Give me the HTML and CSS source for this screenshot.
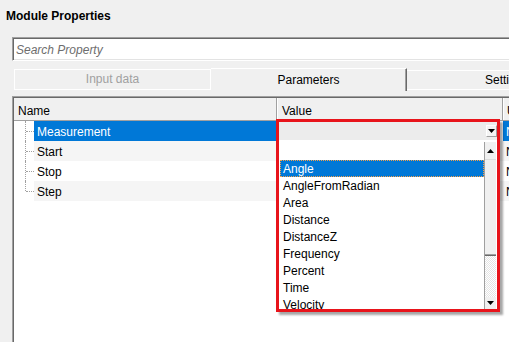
FILE: index.html
```html
<!DOCTYPE html>
<html>
<head>
<meta charset="utf-8">
<link rel="stylesheet" href="styles.css">
</head>
<body>
<div class="title">Module Properties</div>
<div class="search"><span class="placeholder">Search Property</span></div>
<div class="tabs">
  <div class="tab tab-disabled">Input data</div>
  <div class="tab tab-active">Parameters</div>
  <div class="tab tab-next">Settings</div>
</div>
<div class="grid-frame">
  <div class="grid">
    <div class="grid-head">
      <div class="hcell h-name">Name</div>
      <div class="hcell h-value">Value</div>
      <div class="hcell h-unit">Unit</div>
    </div>
    <div class="row selected">
      <div class="tree"></div>
      <div class="cell c-name">Measurement</div>
      <div class="cell c-value"></div>
      <div class="cell c-unit">None</div>
    </div>
    <div class="row alt">
      <div class="tree"></div>
      <div class="cell c-name">Start</div>
      <div class="cell c-value"></div>
      <div class="cell c-unit">None</div>
    </div>
    <div class="row">
      <div class="tree"></div>
      <div class="cell c-name">Stop</div>
      <div class="cell c-value"></div>
      <div class="cell c-unit">None</div>
    </div>
    <div class="row alt">
      <div class="tree last"></div>
      <div class="cell c-name">Step</div>
      <div class="cell c-value"></div>
      <div class="cell c-unit">None</div>
    </div>
  </div>
</div>

<div class="dropdown">
  <div class="combo">
    <div class="combo-btn">
      <svg width="7" height="4" viewBox="0 0 7 4"><polygon points="0,0 7,0 3.5,4" fill="#000"/></svg>
    </div>
  </div>
  <div class="list">
    <div class="items">
      <div class="item blank"></div>
      <div class="item sel">Angle</div>
      <div class="item">AngleFromRadian</div>
      <div class="item">Area</div>
      <div class="item">Distance</div>
      <div class="item">DistanceZ</div>
      <div class="item">Frequency</div>
      <div class="item">Percent</div>
      <div class="item">Time</div>
      <div class="item">Velocity</div>
    </div>
    <div class="scrollbar">
      <div class="sb-btn sb-up">
        <svg width="7" height="4" viewBox="0 0 7 4"><polygon points="0,4 7,4 3.5,0" fill="#000"/></svg>
      </div>
      <div class="sb-thumb"></div>
      <div class="sb-track"></div>
      <div class="sb-btn sb-down">
        <svg width="7" height="4" viewBox="0 0 7 4"><polygon points="0,0 7,0 3.5,4" fill="#000"/></svg>
      </div>
    </div>
  </div>
</div>
</body>
</html>
```

FILE: styles.css
```css
html, body {
  margin: 0;
  padding: 0;
}
body {
  width: 509px;
  height: 342px;
  overflow: hidden;
  position: relative;
  background: #f0f0f0;
  font-family: "Liberation Sans", Arial, sans-serif;
  font-size: 12px;
  color: #000;
}

.title {
  padding: 9px 0 0 6px;
  height: 14px;
  line-height: 14px;
  font-weight: bold;
}

.search {
  margin: 14px 0 0 12px;
  height: 24px;
  box-sizing: border-box;
  background: #fff;
  border-top: 1px solid #a0a0a0;
  border-left: 1px solid #a0a0a0;
  border-bottom: 1px solid #fff;
  box-shadow: inset 1px 1px 0 #696969, inset 0 -1px 0 #e3e3e3;
  padding: 2px 0 0 3px;
  line-height: 20px;
}
.placeholder {
  font-style: italic;
  color: #6d6d6d;
}

.tabs {
  margin-top: 6px;
  height: 24px;
  display: flex;
  align-items: flex-start;
  padding-left: 14px;
  overflow: hidden;
}
.tab {
  box-sizing: border-box;
  text-align: center;
  flex-shrink: 0;
}
.tab-disabled {
  margin-top: 2px;
  width: 197px;
  height: 21px;
  border: 1px solid #fff;
  color: #a0a0a0;
  line-height: 19px;
}
.tab-active {
  margin-top: 1px;
  width: 196px;
  height: 23px;
  border-top: 1px solid #fff;
  border-right: 1px solid #696969;
  box-shadow: inset -1px 0 0 #a0a0a0;
  line-height: 22px;
}
.tab-next {
  margin-top: 3px;
  flex: 1 0 auto;
  height: 20px;
  border-top: 1px solid #fff;
  border-bottom: 1px solid #fff;
  text-align: left;
  padding-left: 78px;
  line-height: 18px;
  white-space: nowrap;
}

.grid-frame {
  margin: 5px 0 0 12px;
  height: 260px;
  overflow: hidden;
  border-top: 1px solid #a0a0a0;
  border-left: 1px solid #a0a0a0;
}
.grid {
  height: 100%;
  background: #fff;
  border-top: 1px solid #696969;
  border-left: 1px solid #696969;
}
.grid-head {
  display: flex;
  height: 23px;
  box-sizing: border-box;
  background: #f0f0f0;
  border-bottom: 1px solid #a0a0a0;
}
.hcell {
  padding-top: 4px;
  line-height: 18px;
  box-sizing: border-box;
  white-space: nowrap;
  flex-shrink: 0;
}
.h-name {
  width: 263px;
  padding-left: 4px;
  border-right: 1px solid #a0a0a0;
}
.h-value {
  width: 226px;
  padding-left: 4px;
  border-left: 1px solid #fff;
  border-right: 1px solid #a0a0a0;
}
.h-unit {
  width: 120px;
  padding-left: 3px;
  border-left: 1px solid #fff;
}

.row {
  display: flex;
  height: 20px;
}
.cell {
  box-sizing: border-box;
  padding-top: 3px;
  line-height: 17px;
  white-space: nowrap;
  flex-shrink: 0;
}
.tree {
  width: 20px;
  flex-shrink: 0;
  position: relative;
  background: #fff;
}
.tree::before {
  content: "";
  position: absolute;
  left: 11px;
  top: 0;
  bottom: 0;
  border-left: 1px dotted #a0a0a0;
}
.tree.last::before {
  bottom: 10px;
}
.tree::after {
  content: "";
  position: absolute;
  left: 12px;
  top: 10px;
  width: 8px;
  border-top: 1px dotted #a0a0a0;
}
.c-name {
  width: 243px;
  padding-left: 3px;
}
.c-value {
  width: 226px;
}
.c-unit {
  width: 120px;
  padding-left: 3px;
}
.row.alt .cell {
  background: #f5f5f5;
}
.row.selected .c-name,
.row.selected .c-unit {
  background: #0078d7;
  color: #fff;
}

.dropdown {
  position: absolute;
  left: 276px;
  top: 119px;
  width: 218px;
  height: 187px;
  border: 3px solid #e8141b;
  background: #fff;
  display: flex;
  flex-direction: column;
  box-shadow: 3px 3px 2px rgba(0, 0, 0, 0.35);
}
.combo {
  height: 18px;
  background: #ececec;
  display: flex;
  justify-content: flex-end;
  align-items: flex-start;
}
.combo-btn {
  margin-top: 3px;
  width: 11px;
  height: 12px;
  box-sizing: border-box;
  background: #f4f4f4;
  border-top: 1px solid #fff;
  border-left: 1px solid #fff;
  border-right: 1px solid #a0a0a0;
  border-bottom: 1px solid #a0a0a0;
  display: flex;
  justify-content: center;
  align-items: center;
}
.combo-btn svg {
  display: block;
}
.list {
  flex: 1;
  display: flex;
  padding-top: 2px;
  min-height: 0;
  overflow: hidden;
}
.items {
  width: 205px;
  padding-left: 1px;
  box-sizing: border-box;
  overflow: hidden;
}
.item {
  height: 17px;
  box-sizing: border-box;
  padding: 2px 0 0 3px;
  line-height: 15px;
  white-space: nowrap;
}
.item.blank {
  height: 18px;
}
.item.sel {
  background: #0078d7;
  color: #fff;
  outline: 1px dotted #f7a047;
  outline-offset: -1px;
}
.scrollbar {
  width: 12px;
  margin-right: 1px;
  box-sizing: border-box;
  border-left: 1px solid #a0a0a0;
  display: flex;
  flex-direction: column;
}
.sb-btn {
  display: flex;
  justify-content: center;
  align-items: center;
  background: #f0f0f0;
}
.sb-btn svg {
  display: block;
}
.sb-up {
  height: 17px;
}
.sb-thumb {
  height: 97px;
  box-sizing: border-box;
  background: #f0f0f0;
  border-top: 1px solid #dcdcdc;
  border-bottom: 1px solid #696969;
  box-shadow: inset 0 -1px 0 #a0a0a0;
}
.sb-track {
  flex: 1;
  background: repeating-conic-gradient(#e4e4e4 0% 25%, #fff 0% 50%) 0 0 / 2px 2px;
}
.sb-down {
  height: 12px;
}
```
